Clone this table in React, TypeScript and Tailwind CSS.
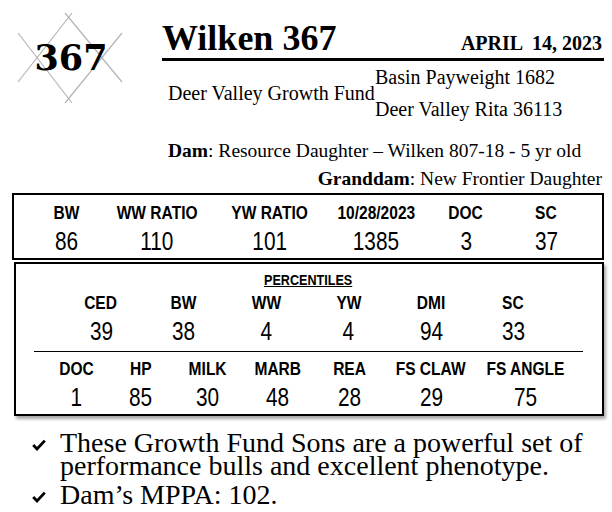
const serif = { fontFamily: '"Liberation Serif", "Times New Roman", serif' }

function Diamond() {
  return (
    <div className="relative w-[162px] h-[120px] shrink-0">
      <svg width="150" height="120" className="absolute left-0 top-0" stroke="#b4b4b4" strokeWidth="1.2" fill="none">
        <line x1="18" y1="33" x2="72" y2="103" />
        <line x1="18" y1="82" x2="72" y2="13" />
        <line x1="122" y1="33" x2="65" y2="103" />
        <line x1="122" y1="82" x2="65" y2="13" />
      </svg>
      <div
        className="absolute left-0 top-[37px] w-[142px] text-center text-[35px] leading-[42px] font-bold text-black"
        style={{ fontFamily: '"DejaVu Serif", "Liberation Serif", serif' }}
      >
        367
      </div>
    </div>
  )
}

function Cell({ label, value, w }: { label: string; value: string; w: string }) {
  return (
    <div className={`${w} flex flex-col items-center`}>
      <div className="text-[18.5px] leading-[20px] font-bold scale-x-[0.84] whitespace-nowrap">{label}</div>
      <div className="mt-1 text-[26px] leading-[28px] scale-x-[0.8] whitespace-nowrap">{value}</div>
    </div>
  )
}

function Check() {
  return (
    <div className="w-[60px] shrink-0 pl-[32px] pt-[8px]">
      <svg width="14" height="12" viewBox="0 0 14 12">
        <path d="M1.2 6 L5 10 L12.8 1.6" stroke="#000" strokeWidth="2.8" fill="none" />
      </svg>
    </div>
  )
}

export default function App() {
  return (
    <div className="w-[612px] h-[512px] bg-white text-black overflow-hidden">
      <div className="flex">
        <Diamond />
        <div className="w-[442px] pt-[18px]" style={serif}>
          <div className="flex items-baseline justify-between pr-[2px]">
            <h1 className="text-[36px] leading-[40px] font-bold">Wilken 367</h1>
            <span className="text-[20px] font-bold whitespace-pre">APRIL  14, 2023</span>
          </div>
          <div className="h-[3px] bg-black" />
          <div className="flex items-center text-[20px]">
            <div className="w-[213px] pl-[6px] leading-[32px] whitespace-nowrap">Deer Valley Growth Fund</div>
            <div className="leading-[32px]">
              <div>Basin Payweight 1682</div>
              <div>Deer Valley Rita 36113</div>
            </div>
          </div>
        </div>
      </div>

      <div className="mt-[12px] pl-[168px] pr-[10px] text-[19.5px] leading-[28px]" style={serif}>
        <div className="whitespace-nowrap"><b>Dam</b>: Resource Daughter – Wilken 807-18 - 5 yr old</div>
        <div className="text-right whitespace-nowrap"><b>Granddam</b>: New Frontier Daughter</div>
      </div>

      <div style={{ fontFamily: '"Liberation Sans", Arial, sans-serif' }}>
        <div className="mt-0 ml-[12px] w-[592px] h-[67px] border-2 border-black flex pt-[8px]">
          <div className="ml-[7px]" />
          <Cell w="w-[90px]" label="BW" value="86" />
          <Cell w="w-[92px]" label="WW RATIO" value="110" />
          <Cell w="w-[134px]" label="YW RATIO" value="101" />
          <Cell w="w-[78px]" label="10/28/2023" value="1385" />
          <Cell w="w-[102px]" label="DOC" value="3" />
          <Cell w="w-[58px]" label="SC" value="37" />
        </div>

        <div className="mt-[2px] ml-[14px] w-[590px] h-[154px] border-2 border-black shadow-[2px_3px_3px_rgba(0,0,0,0.35)] pt-[8px]">
          <div className="text-center text-[15px] leading-[16px] font-bold underline scale-x-[0.84] pr-[2px]">PERCENTILES</div>
          <div className="mt-[5px] ml-[44px] flex">
            <Cell w="w-[82px]" label="CED" value="39" />
            <Cell w="w-[83px]" label="BW" value="38" />
            <Cell w="w-[82px]" label="WW" value="4" />
            <Cell w="w-[83px]" label="YW" value="4" />
            <Cell w="w-[82px]" label="DMI" value="94" />
            <Cell w="w-[82px]" label="SC" value="33" />
          </div>
          <div className="mt-[6px] ml-[18px] w-[549px] h-px bg-black" />
          <div className="mt-[7px] ml-[29px] flex">
            <Cell w="w-[63px]" label="DOC" value="1" />
            <Cell w="w-[65px]" label="HP" value="85" />
            <Cell w="w-[69px]" label="MILK" value="30" />
            <Cell w="w-[71px]" label="MARB" value="48" />
            <Cell w="w-[73px]" label="REA" value="28" />
            <Cell w="w-[90px]" label="FS CLAW" value="29" />
            <Cell w="w-[98px]" label="FS ANGLE" value="75" />
          </div>
        </div>
      </div>

      <ul className="mt-[15px] text-[28px] leading-[23px]" style={serif}>
        <li className="flex">
          <Check />
          <span className="w-[540px]">These Growth Fund Sons are a powerful set of performance bulls and excellent phenotype.</span>
        </li>
        <li className="flex mt-[6px]">
          <Check />
          <span>Dam’s MPPA: 102.</span>
        </li>
      </ul>
    </div>
  )
}
